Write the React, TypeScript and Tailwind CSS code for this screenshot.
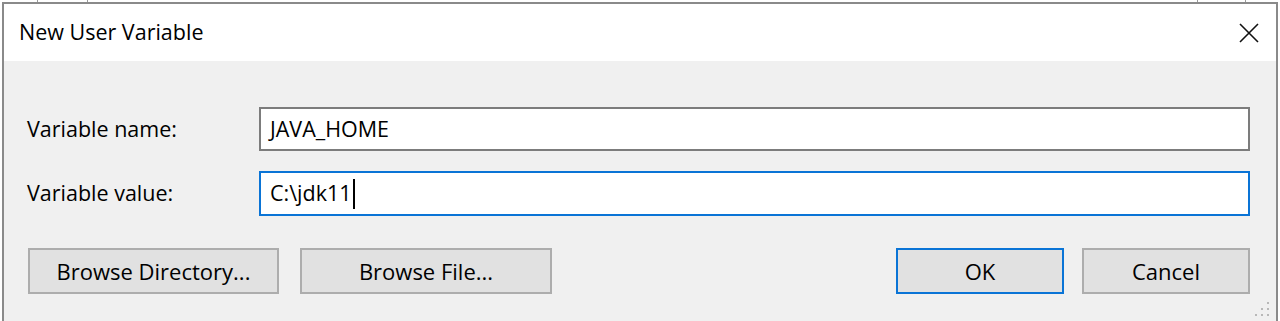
import React from "react";

const font = { fontFamily: '"Open Sans", "Noto Sans", sans-serif' };

const Grip = () => (
  <svg width="14" height="14" viewBox="0 0 14 14" className="absolute right-[7px] bottom-[5px]">
    {[
      [12, 0],
      [6, 6],
      [12, 6],
      [0, 12],
      [6, 12],
      [12, 12],
    ].map(([x, y], i) => (
      <rect key={i} x={x} y={y} width="2" height="2" fill="#b8b8b8" />
    ))}
  </svg>
);

const Field = ({ label, value, focused }: { label: string; value: string; focused?: boolean }) => (
  <div className="flex items-center">
    <div className="w-[232px] text-[21.5px] text-black">{label}</div>
    <div
      className={
        focused
          ? "flex-1 h-[45px] bg-white border-2 border-[#0a74d6] flex items-center pl-[9px] text-[21.5px] text-black"
          : "flex-1 h-[44px] bg-white border-2 border-[#7c7c7c] flex items-center pl-[9px] text-[21.5px] text-black"
      }
    >
      <span>{value}</span>
      {focused && <span className="w-[2px] h-[30px] bg-black ml-[1px]" />}
    </div>
  </div>
);

const Button = ({ children, w, primary }: { children: React.ReactNode; w: string; primary?: boolean }) => (
  <button
    className={
      (primary ? "border-[#0a74d6] " : "border-[#adadad] ") +
      w +
      " h-[46px] border-2 bg-[#e1e1e1] text-[22px] text-black flex items-center justify-center"
    }
  >
    {children}
  </button>
);

export default function App() {
  return (
    <div className="w-[1280px] h-[321px] bg-white overflow-hidden" style={font}>
      {/* bits of the window behind */}
      <div className="h-[2px] flex">
        <div className="ml-[37px] w-[1px] h-full bg-[#9a9a9a]" />
        <div className="ml-[49px] w-[1px] h-full bg-[#9a9a9a]" />
        <div className="ml-[1109px] w-[1px] h-full bg-[#9a9a9a]" />
        <div className="ml-[47px] w-[1px] h-full bg-[#9a9a9a]" />
      </div>
      <div className="ml-[2px] w-[1276px] h-[319px] border-t-2 border-l-2 border-r-2 border-[#8a8a8a] flex flex-col">
        <div className="h-[57px] bg-white flex items-center justify-between pl-[15px] pr-[17px]">
          <span className="text-[21.5px] text-black">New User Variable</span>
          <svg width="20" height="20" viewBox="0 0 20 20">
            <path d="M1 1 L19 19 M19 1 L1 19" stroke="#111" strokeWidth="1.6" />
          </svg>
        </div>
        <div className="relative flex-1 bg-[#f0f0f0] pt-[46px] pl-[23px] pr-[26px] flex flex-col">
          <div className="flex flex-col gap-[20px]">
            <Field label="Variable name:" value="JAVA_HOME" />
            <Field label="Variable value:" value="C:\jdk11" focused />
          </div>
          <div className="mt-[32px] flex items-center">
            <Button w="w-[251px] ml-[1px]">Browse Directory...</Button>
            <Button w="w-[252px] ml-[21px]">Browse File...</Button>
            <div className="flex-1" />
            <Button w="w-[168px]" primary>
              OK
            </Button>
            <Button w="w-[168px] ml-[18px]">Cancel</Button>
          </div>
          <Grip />
        </div>
      </div>
    </div>
  );
}
